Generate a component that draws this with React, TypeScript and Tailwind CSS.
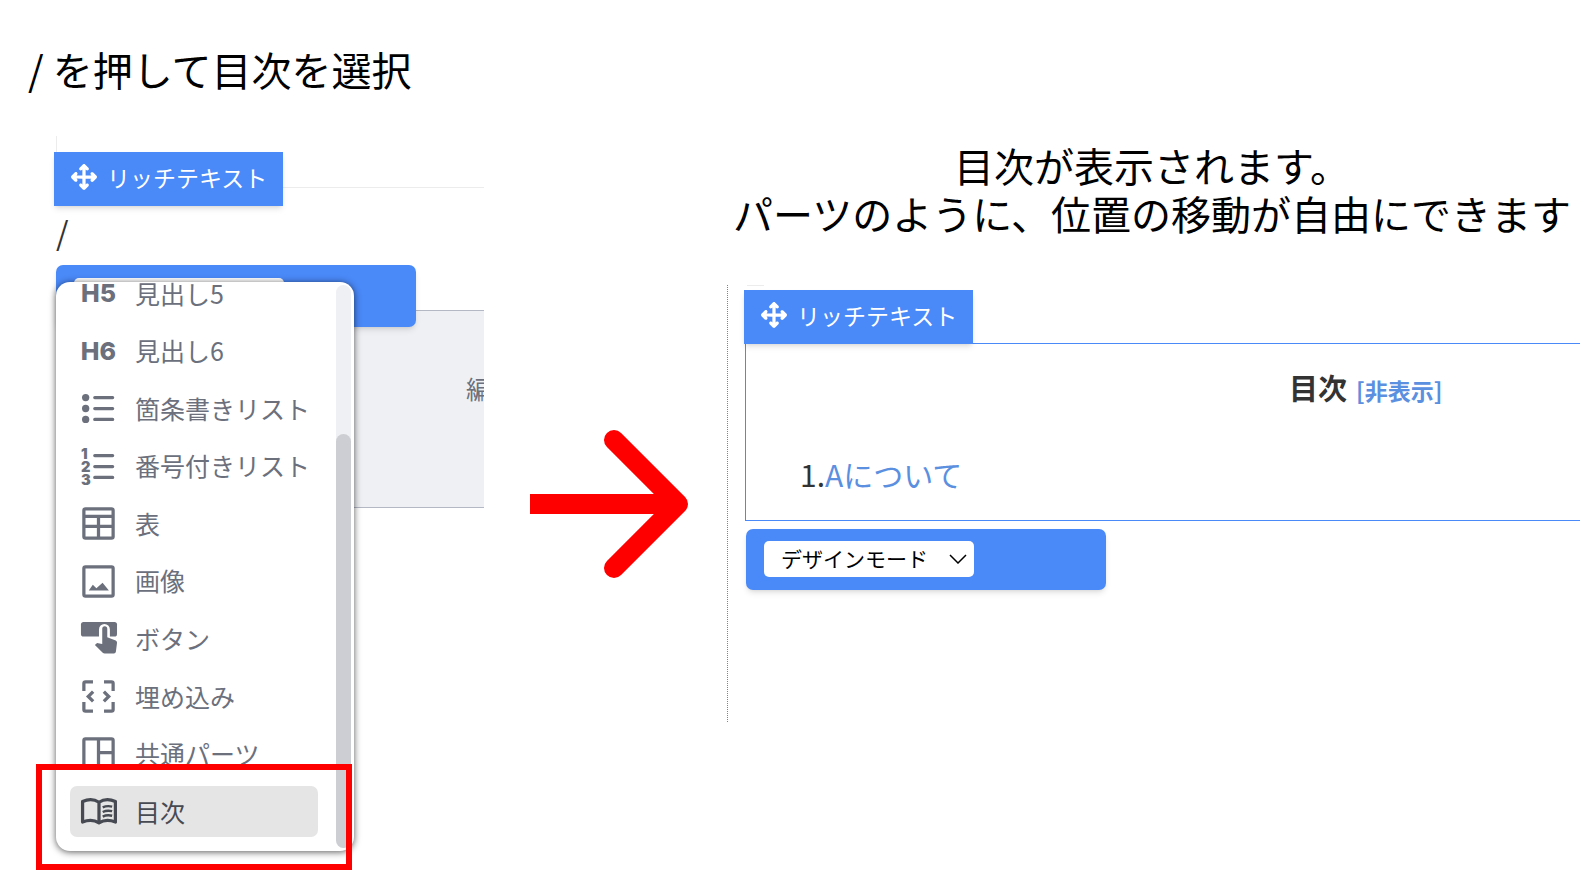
import React from 'react';
import { FaArrowsUpDownLeftRight } from 'react-icons/fa6';

const StrokeIcon = ({ children }: { children: React.ReactNode }) => (
  <svg viewBox="0 0 24 24" className="h-full w-full" fill="none" stroke="currentColor" strokeWidth="2" aria-hidden="true">
    {children}
  </svg>
);

const HeadingIcon = ({ level }: { level: number }) => (
  <span className="font-['Inter',sans-serif] text-[25px] leading-none font-extrabold" aria-hidden="true">
    H{level}
  </span>
);

const BulletIcon = () => (
  <StrokeIcon>
    <g fill="currentColor" stroke="none">
      <circle cx="4.1" cy="5.3" r="2.25" />
      <circle cx="4.1" cy="12" r="2.25" />
      <circle cx="4.1" cy="18.7" r="2.25" />
    </g>
    <path d="M9.7 5.3h11M9.7 12h11M9.7 18.7h11" strokeLinecap="round" />
  </StrokeIcon>
);

const NumberedIcon = () => (
  <StrokeIcon>
    <g fill="currentColor" stroke="none" className="font-['Inter',sans-serif] text-[9px] font-black">
      <text x="1.2" y="7.2">1</text>
      <text x="1.2" y="15.2">2</text>
      <text x="1.2" y="23.2">3</text>
    </g>
    <path d="M9.7 5.3h11M9.7 12h11M9.7 18.7h11" strokeLinecap="round" />
  </StrokeIcon>
);

const TableIcon = () => (
  <StrokeIcon>
    <rect x="3" y="3" width="18" height="18" rx="1" />
    <path d="M3 7.6h18M3 13.8h18M12 7.6V21" />
  </StrokeIcon>
);

const ImageIcon = () => (
  <StrokeIcon>
    <rect x="3" y="3" width="18" height="18" rx="1" />
    <path d="M6 17.6l2.5-3.6 2.2 2.2 3.8-3.4 3.9 4.8z" fill="currentColor" stroke="none" />
  </StrokeIcon>
);

const ButtonIcon = () => (
  <StrokeIcon>
    <g stroke="none">
      <rect x="1.2" y="1.8" width="22.2" height="9" rx="1.6" fill="currentColor" />
      <path d="M12.3 11.5V6.4a3.35 3.35 0 0 1 6.7 0v5.1z" fill="white" />
      <path
        d="M14.3 6a1.55 1.55 0 0 1 3.1 0v5.2l5.2 2q.9.5.8 1.4l-.7 5.5q-.2 1.1-1.2 1.1h-5.7q-.7 0-1.2-.5L9.8 16l.8-.8q.5-.5 1.2-.3l2.5.5z"
        fill="currentColor"
      />
    </g>
  </StrokeIcon>
);

const EmbedIcon = () => (
  <StrokeIcon>
    <path d="M8.6 3H4a1 1 0 0 0-1 1v4.6M15.4 3H20a1 1 0 0 1 1 1v4.6M8.6 21H4a1 1 0 0 1-1-1v-4.6M15.4 21H20a1 1 0 0 0 1-1v-4.6" />
    <path d="M8.7 9L5.7 12l3 3M15.3 9l3 3-3 3" />
  </StrokeIcon>
);

const PartsIcon = () => (
  <StrokeIcon>
    <rect x="3" y="3" width="18" height="18" rx="1" />
    <path d="M12 3v18M12 11.4h9" />
  </StrokeIcon>
);

const BookIcon = () => (
  <StrokeIcon>
    <path d="M12.3 6.3C9.5 4.4 5.6 4.3 2.2 5.8v12.7c3.4-1.3 7.3-1.2 10.1.5 2.8-1.7 6.7-1.8 10.1-.5V5.8c-3.4-1.5-7.3-1.4-10.1.5zV19" strokeLinejoin="round" />
    <path
      d="M14.6 9.5c1.8-.9 3.8-1 5.8-.5M14.6 12.3c1.8-.9 3.8-1 5.8-.5M14.6 15.1c1.8-.9 3.8-1 5.8-.5"
      strokeWidth="1.5"
    />
  </StrokeIcon>
);

const menuItems = [
  { label: '見出し5', icon: <HeadingIcon level={5} /> },
  { label: '見出し6', icon: <HeadingIcon level={6} /> },
  { label: '箇条書きリスト', icon: <BulletIcon /> },
  { label: '番号付きリスト', icon: <NumberedIcon /> },
  { label: '表', icon: <TableIcon /> },
  { label: '画像', icon: <ImageIcon /> },
  { label: 'ボタン', icon: <ButtonIcon /> },
  { label: '埋め込み', icon: <EmbedIcon /> },
  { label: '共通パーツ', icon: <PartsIcon /> },
  { label: '目次', icon: <BookIcon />, active: true },
];

const BlockTag = () => (
  <button
    type="button"
    className="relative z-10 flex h-[54px] w-[229px] shrink-0 items-center gap-[10px] bg-[#4a89f8] pb-[4px] pl-[17px] text-[23px] text-white shadow-md"
  >
    <FaArrowsUpDownLeftRight size={26} />
    リッチテキスト
  </button>
);

const SlashMenu = () => (
  <div className="absolute top-[17px] left-0 z-20">
    <div className="flex h-[569px] w-[298px] items-end overflow-hidden rounded-[14px] bg-white pb-[14px] pl-[14px] shadow-[0_1px_7px_rgba(0,0,0,0.65)]">
      <ul className="flex h-[569px] w-[248px] flex-col justify-between">
        {menuItems.map((item) => (
          <li key={item.label}>
            <button
              type="button"
              className={`flex h-[51px] w-full items-center gap-[17px] rounded-[7px] pl-[9px] text-[25px] ${
                item.active ? 'bg-[#e5e5e5] text-[#474a52]' : 'text-[#6b707c]'
              }`}
            >
              <span className="flex size-[39px] items-center justify-center">{item.icon}</span>
              {item.label}
            </button>
          </li>
        ))}
      </ul>
    </div>
    {/* scrollbar */}
    <div className="absolute inset-y-[3px] right-[3px] flex w-[15px] flex-col justify-end rounded-full bg-[#eff0f3]">
      <div className="h-[414px] rounded-full bg-[#cdced3]" />
    </div>
    {/* highlight frame */}
    <div className="pointer-events-none absolute -bottom-[19px] -left-[20px] h-[106px] w-[316px] border-[6px] border-[#ff0000]" />
  </div>
);

const ModeSelect = () => (
  <div className="relative w-[210px]">
    <select
      aria-label="表示モード"
      className="h-[36px] w-full appearance-none rounded-[5px] bg-white pb-[2px] pl-[17px] text-[21px] leading-[34px] text-black"
    >
      <option>デザインモード</option>
    </select>
    <svg
      viewBox="0 0 18 10"
      className="pointer-events-none absolute top-[13px] right-[7px] h-[10px] w-[18px]"
      fill="none"
      stroke="black"
      strokeWidth="1.5"
      aria-hidden="true"
    >
      <path d="M1 1l8 8 8-8" />
    </svg>
  </div>
);

const App: React.FC = () => {
  return (
    <main className="flex min-h-screen overflow-hidden bg-white font-['Noto_Sans_CJK_JP',sans-serif] text-black">
      <section className="w-[484px] shrink-0 pt-[45px]">
        <h1 className="pl-[28px] text-[40px] leading-[48px]">/ を押して目次を選択</h1>

        <div className="mt-[43px] ml-[56px] h-[16px] border-l border-[#ececec]" />
        <div className="flex pl-[54px]">
          <BlockTag />
          <div className="mt-[35px] flex-1 border-t border-[#ececec]" />
        </div>
        <p className="pb-[9px] pl-[56px] text-[32px] leading-[50px] text-[#333333]">/</p>

        <div className="relative ml-[56px]">
          <div className="relative z-10 h-[62px] w-[360px] rounded-[7px] bg-[#4a89f8] pt-[13px] pl-[18px] shadow-md">
            <div className="h-[36px] w-[210px] rounded-[5px] bg-white" />
          </div>
          <div className="-mt-[17px] flex h-[198px] justify-end overflow-hidden border-y border-[#b4b7c4] bg-[#eff0f3] pt-[59px]">
            <span className="w-[18px] overflow-hidden text-[25px] leading-[36px] whitespace-nowrap text-[#6b707c]">編</span>
          </div>
          <SlashMenu />
        </div>
      </section>

      <div className="w-[243px] shrink-0 pt-[430px] pl-[46px]">
        <svg viewBox="0 0 158 148" className="h-[148px] w-[158px]" fill="none" stroke="#ff0000" strokeWidth="20" aria-hidden="true">
          <path d="M0 74h146" />
          <path d="M84 10l64 64-64 64" strokeLinecap="round" strokeLinejoin="round" />
        </svg>
      </div>

      <section className="min-w-0 flex-1 pt-[141px]">
        <h2 className="pr-[3px] text-center text-[40px] leading-[48px] whitespace-nowrap">
          目次が表示されます。
          <br />
          パーツのように、位置の移動が自由にできます
        </h2>

        <div className="mt-[48px] h-[437px] border-l border-dotted border-[#4a89f8] pl-[16px]">
          <div className="ml-[3px] h-[5px] w-[17px] border-t border-[#ececec]" />
          <BlockTag />
          <div className="-mt-px ml-px h-[178px] border-y border-l border-[#4a89f8] text-[#333333]">
            <p className="flex items-baseline gap-[9px] pt-[21px] pl-[543px] text-[29px] leading-[44px] font-bold whitespace-nowrap">
              目次
              <a href="#toc" className="text-[23px] text-[#5b8fe0]">[非表示]</a>
            </p>
            <p className="pt-[40px] pl-[54px] text-[30px] leading-[44px]">
              1.<a href="#about-a" className="text-[#5b8fe0]">Aについて</a>
            </p>
          </div>
          <div className="mt-[8px] ml-[2px] h-[61px] w-[360px] rounded-[7px] bg-[#4a89f8] pt-[12px] pl-[18px] shadow-md">
            <ModeSelect />
          </div>
        </div>
      </section>
    </main>
  );
};

export default App;
